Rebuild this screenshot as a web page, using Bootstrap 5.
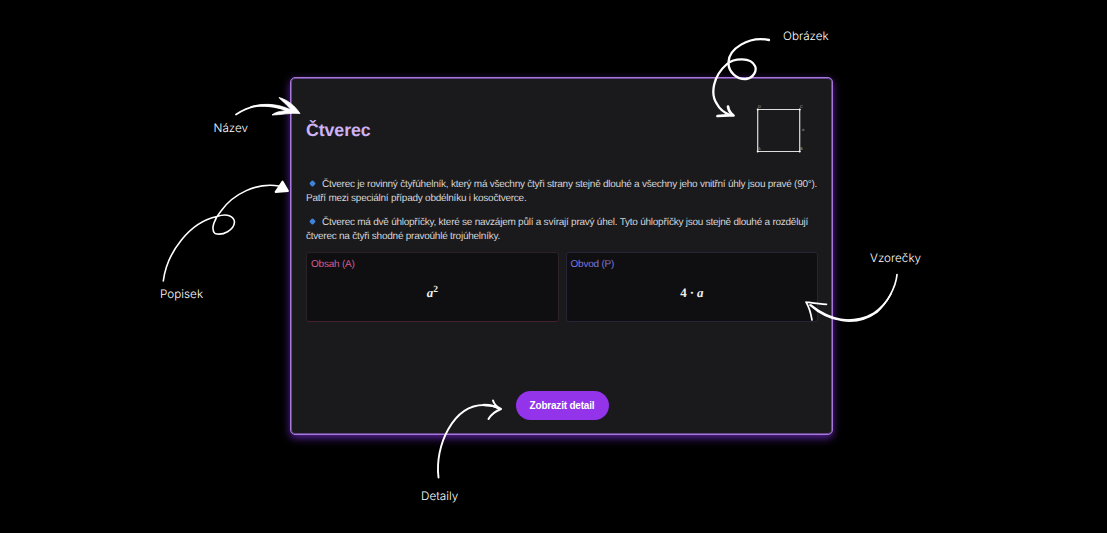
<!DOCTYPE html>
<html lang="cs">
<head>
<meta charset="utf-8">
<meta name="viewport" content="width=device-width, initial-scale=1">
<title>Čtverec</title>
<link href="https://cdn.jsdelivr.net/npm/bootstrap@5.3.0/dist/css/bootstrap.min.css" rel="stylesheet">
<style>
body{background:#000;color:#fff;height:533px;overflow:hidden;text-rendering:geometricPrecision}
.stage{width:1107px;height:533px;padding:77px 0 0 290px}
.shape-card{width:543px;height:358px;background:#1a1a1c;border:1px solid #a877dc;border-radius:5px;box-shadow:0 3px 8px rgba(126,50,220,.7),inset 0 0 0 1px #68488c;padding:24px 14px 14px 15px;font-family:"Liberation Sans",Arial,sans-serif;color:#d4d4d8}
.shape-head{height:56px}
.shape-title{font-size:17.8px;font-weight:700;color:#cdb2f6;line-height:22px;letter-spacing:-.1px}
.desc{font-size:10px;letter-spacing:-.245px;line-height:14px;margin-bottom:10px;white-space:nowrap}
.desc:last-child{margin-bottom:8px}
.dot{display:inline-block;width:5px;height:5px;background:#3f83d8;transform:rotate(45deg);border-radius:1.5px;margin:0 7px 1px 4px}
.formulas{gap:7px}
.formula{height:70px;background:#0f0f12;border:1px solid #2a2338;border-radius:3px;padding:5px 4px;font-size:10px;letter-spacing:-.22px;line-height:13px}
.formula.area{border-color:#2a2228;border-bottom-color:#45202e}
.area .cap{color:#d15c91}
.perim .cap{color:#7e74dc}
.math{font-family:"Liberation Serif",serif;font-weight:700;font-size:13px;letter-spacing:0;line-height:18px;color:#eee;padding-top:13px}
.perim .math{letter-spacing:-.15px}
.math sup{font-size:9.5px;top:-.55em}
.btn-detail{width:93px;height:29px;background:#9333ea;color:#fff;font-size:10px;letter-spacing:-.2px;font-weight:700;line-height:29px;padding:0;border:0}
.btn-detail:hover{background:#a34bf0;color:#fff}
.note{position:absolute;font-family:Inter,sans-serif;font-size:11.7px;font-weight:300;line-height:16px;letter-spacing:.02px;white-space:nowrap}
</style>
</head>
<body>
<main class="stage position-relative">
  <article class="shape-card d-flex flex-column">
    <header class="shape-head d-flex justify-content-between align-items-center">
      <h1 class="shape-title mb-0">Čtverec</h1>
      <svg width="62" height="56" viewBox="756 102 62 56" aria-hidden="true">
        <path d="M757.7 109.5H799.7V151.5H757.7Z" fill="none" stroke="#ddd" stroke-width="1.2"/>
        <g fill="#fff"><circle cx="757.7" cy="109.5" r="1"/><circle cx="799.7" cy="109.5" r="1"/><circle cx="757.7" cy="151.5" r="1"/><circle cx="799.7" cy="151.5" r="1"/></g>
        <g fill="#aaa" font-size="4" font-family="Liberation Sans"><text x="758" y="108">D</text><text x="800" y="108">C</text><text x="758" y="150">A</text><text x="800" y="150">B</text><text x="802" y="131">a</text></g>
      </svg>
    </header>
    <section class="pt-3 mt-1">
      <p class="desc"><i class="dot"></i>Čtverec je rovinný čtyřúhelník, který má všechny čtyři strany stejně dlouhé a všechny jeho vnitřní úhly jsou pravé (90°).<br>Patří mezi speciální případy obdélníku i kosočtverce.</p>
      <p class="desc"><i class="dot"></i>Čtverec má dvě úhlopříčky, které se navzájem půlí a svírají pravý úhel. Tyto úhlopříčky jsou stejně dlouhé a rozdělují<br>čtverec na čtyři shodné pravoúhlé trojúhelníky.</p>
    </section>
    <section class="formulas d-flex">
      <div class="formula area flex-fill w-50"><div class="cap">Obsah (A)</div><div class="math text-center"><i>a</i><sup>2</sup></div></div>
      <div class="formula perim flex-fill w-50"><div class="cap">Obvod (P)</div><div class="math text-center">4 · <i>a</i></div></div>
    </section>
    <footer class="mt-auto d-flex justify-content-center"><button class="btn btn-detail rounded-pill">Zobrazit detail</button></footer>
  </article>

  <svg class="position-absolute top-0 start-0 pe-none" width="1107" height="533" viewBox="0 0 1107 533" fill="none" stroke="#fff" stroke-linecap="round" stroke-linejoin="round" aria-hidden="true">
    <!-- název -->
    <path d="M236 114.5C251 104.500 268 101.500 290 110.500" stroke-width="1.7"/>
    <path d="M251 106.5C267 102 281 105 291 110C287 104 281 100.500 279 97.500C288 100 295 106 300 113.500C290 112.500 281 115 272 115C276 111.500 281 111.500 286 110.500C275 106.500 264 105.500 251 106.500Z" fill="#fff" stroke-width=".8"/>
    <!-- popisek -->
    <path d="M163.300 281C167 252 190 222 217 216.500C227 213 234 216 234.500 222C234 230 223 236 215 233.500C210 229 215 218 221 211C233 194 257 182 279 186" stroke-width="1.6"/>
    <path d="M282.500 181.500L288 191L275.500 192Z" fill="#fff" stroke-width="1.8"/>
    <!-- obrázek -->
    <path d="M769 40C748 36 729 49 728.500 62C728 73 738 79.500 746 79C754 78 757 70 755 66C751 57 734 58 727 64C713 76 710 94 717 104C720 110 725 113 730 115" stroke-width="2.3"/>
    <path d="M728 106.500C728.500 110 730 113 733.500 115.500C728 115 722 115.500 717.500 116" stroke-width="2.7"/>
    <!-- vzorečky -->
    <path d="M897 274.500C896 288 886 304 877 312C855 328 828 321 810 305" stroke-width="1.7"/>
    <path d="M891 294C886 303 881 308 873 313.500C852 326 829 319 811 305C829 322 852 324 873 314C883 307 888 300 891 294Z" fill="#fff" stroke-width="1.5"/>
    <path d="M826.500 304.300C819 304 813 303 806 302C809 307 811 314 812 320" stroke-width="1.7"/>
    <!-- detaily -->
    <path d="M438.500 477.500C434.500 446 453 405 484 405C490 405 495 406 499 408.500" stroke-width="1.9"/>
    <path d="M484 405C490 405 495 406 499 408.500" stroke-width="2.300"/>
    <path d="M493 400.500C494 404 497 407 501 409C496 411 491 414.500 488.500 419" stroke-width="2"/>
  </svg>
  <span class="note" style="left:213.500px;top:120px">Název</span>
  <span class="note" style="left:160px;top:286px">Popisek</span>
  <span class="note" style="left:783px;top:28px">Obrázek</span>
  <span class="note" style="left:870px;top:250px">Vzorečky</span>
  <span class="note" style="left:421px;top:488px">Detaily</span>
</main>
<script src="https://cdn.jsdelivr.net/npm/bootstrap@5.3.0/dist/js/bootstrap.bundle.min.js"></script>
</body>
</html>
